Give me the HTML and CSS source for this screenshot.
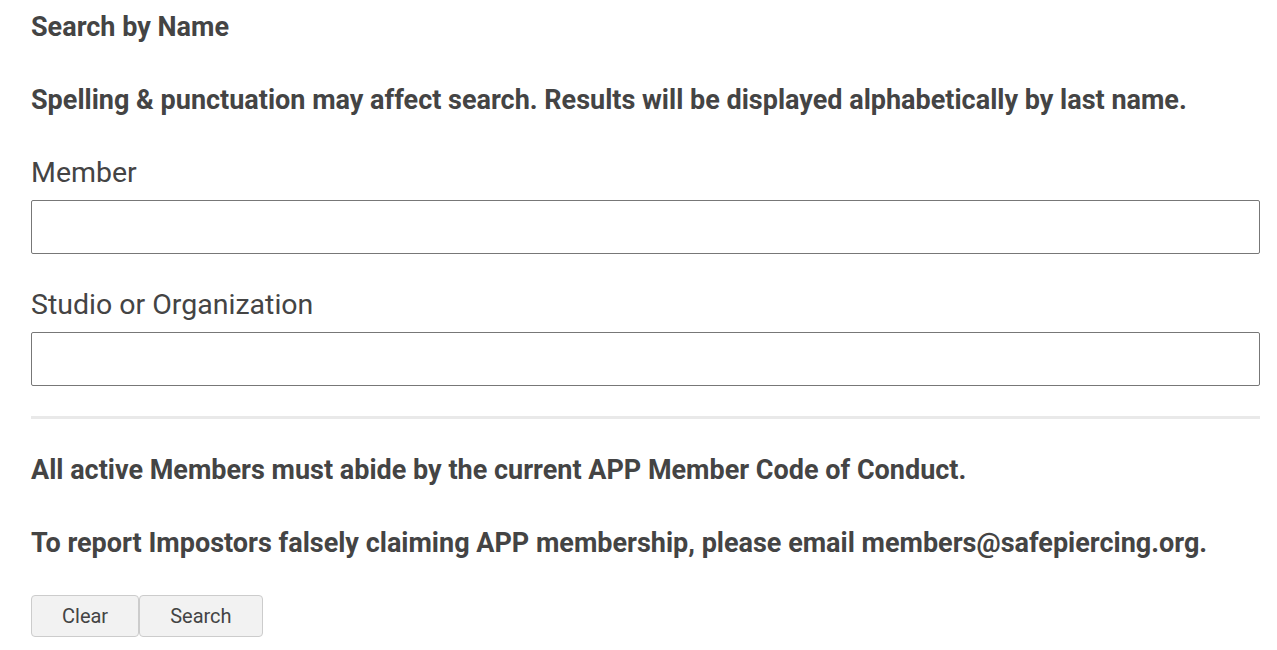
FILE: index.html
```html
<!DOCTYPE html>
<html lang="en">
<head>
    <meta charset="UTF-8">
    <meta name="viewport" content="width=device-width, initial-scale=1.0">
    <title>Member Search</title>
    <link rel="stylesheet" href="styles.css">
</head>
<body>
    <form class="search-form" onsubmit="return false">
        <p class="note">Search by Name</p>
        <p class="note">Spelling &amp; punctuation may affect search. Results will be displayed alphabetically by last name.</p>

        <label for="member">Member</label>
        <input type="text" id="member">

        <label for="studio">Studio or Organization</label>
        <input type="text" id="studio">

        <hr>

        <p class="note">All active Members must abide by the current APP Member Code of Conduct.</p>
        <p class="note">To report Impostors falsely claiming APP membership, please email members@safepiercing.org.</p>

        <div class="actions">
            <button type="reset">Clear</button>
            <button type="submit">Search</button>
        </div>
    </form>
</body>
</html>
```

FILE: styles.css
```css
body {
    margin: 0;
    font-family: Roboto, "Liberation Sans", sans-serif;
    color: #444;
    background: #fff;
}
.search-form {
    padding: 9px 17px 0 31px;
}
.note {
    margin: 0 0 37px;
    font-size: 27px;
    font-weight: bold;
    line-height: 36px;
}
label {
    display: block;
    font-size: 28.5px;
    line-height: 36px;
    margin: 33px 0 9px;
}
input[type="text"] {
    display: block;
    box-sizing: border-box;
    width: 100%;
    height: 54px;
    margin: 0;
    border: 1px solid #777;
    border-radius: 2px;
    font: inherit;
    font-size: 20px;
    padding: 0 12px;
}
hr {
    border: none;
    border-top: 3px solid #e9e9e9;
    margin: 30px 0 33px;
}
.actions {
    display: flex;
    margin-top: -3px;
}
button {
    font-family: Roboto, "Liberation Sans", sans-serif;
    font-size: 20px;
    color: #444;
    background: #f2f2f2;
    border: 1px solid #ccc;
    border-radius: 4px;
    height: 42px;
    padding: 0 30px;
    cursor: pointer;
}
```
